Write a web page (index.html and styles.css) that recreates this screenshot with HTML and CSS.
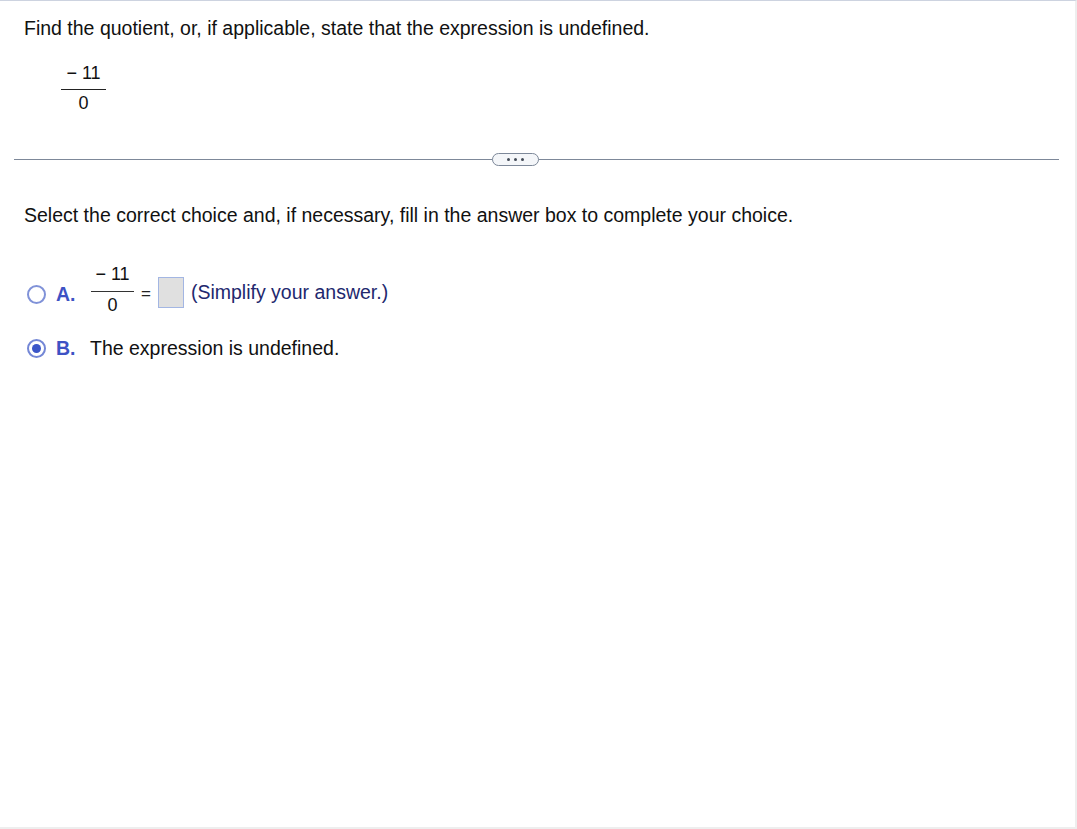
FILE: index.html
```html
<!DOCTYPE html>
<html>
<head>
<meta charset="utf-8">
<link rel="stylesheet" href="styles.css">
</head>
<body>
<div class="page">
  <div class="question">
    <p class="prompt">Find the quotient, or, if applicable, state that the expression is undefined.</p>
    <div class="frac main-frac">
      <span class="num">− 11</span>
      <span class="den">0</span>
    </div>
  </div>
  <div class="divider">
    <span class="more"><i></i><i></i><i></i></span>
  </div>
  <div class="answer">
    <p class="instr">Select the correct choice and, if necessary, fill in the answer box to complete your choice.</p>
    <div class="choice choice-a">
      <span class="radio"></span>
      <span class="letter">A.</span>
      <div class="frac small-frac">
        <span class="num">− 11</span>
        <span class="den">0</span>
      </div>
      <span class="eq">=</span>
      <span class="box"></span>
      <span class="hint">(Simplify your answer.)</span>
    </div>
    <div class="choice choice-b">
      <span class="radio checked"></span>
      <span class="letter">B.</span>
      <span class="text">The expression is undefined.</span>
    </div>
  </div>
</div>
</body>
</html>
```

FILE: styles.css
```css
html, body {
  margin: 0;
  padding: 0;
  background: #ffffff;
}
body {
  font-family: "Liberation Sans", Arial, sans-serif;
  color: #111;
}
.page {
  width: 1075px;
  height: 826px;
  border-top: 1px solid #cdd3e0;
  border-right: 2px solid #eeeeee;
  border-bottom: 2px solid #eeeeee;
  box-sizing: content-box;
}
.question {
  padding: 16px 0 0 24px;
  height: 158px;
  box-sizing: border-box;
}
.prompt {
  margin: 0;
  font-size: 19.5px;
  line-height: 22px;
}
.frac {
  display: inline-flex;
  flex-direction: column;
  align-items: center;
  font-size: 18px;
}
.main-frac {
  margin: 24px 0 0 37px;
  width: 45px;
}
.frac .num {
  display: block;
  width: 100%;
  text-align: center;
  line-height: 20px;
  padding-bottom: 6px;
  border-bottom: 1px solid #222;
}
.frac .den {
  display: block;
  line-height: 20px;
  padding-top: 3px;
}
.divider {
  position: relative;
  margin: 0 0 0 14px;
  width: 1045px;
  height: 1px;
  background: #7d8899;
}
.more {
  position: absolute;
  left: 478px;
  top: -6px;
  width: 45px;
  height: 11px;
  border: 1px solid #7d8899;
  border-radius: 7px;
  background: #f4f6f9;
  display: flex;
  align-items: center;
  justify-content: center;
  gap: 4px;
}
.more i {
  width: 3px;
  height: 3px;
  border-radius: 50%;
  background: #444b57;
}
.answer {
  padding: 44px 0 0 24px;
}
.instr {
  margin: 0;
  font-size: 19.5px;
  line-height: 22px;
}
.choice {
  display: flex;
  align-items: center;
  font-size: 19.5px;
}
.choice-a {
  margin-top: 37px;
  height: 62px;
}
.choice-b {
  margin-top: 12px;
  height: 22px;
}
.radio {
  width: 15px;
  height: 15px;
  border: 2px solid #8092d8;
  border-radius: 50%;
  margin-left: 3px;
  box-sizing: content-box;
  display: flex;
  align-items: center;
  justify-content: center;
}
.radio.checked {
  border-color: #7487d6;
}
.radio.checked::after {
  content: "";
  width: 9px;
  height: 9px;
  border-radius: 50%;
  background: #3b56c8;
}
.letter {
  margin-left: 10px;
  font-weight: bold;
  color: #3d52c4;
  width: 34px;
}
.small-frac {
  width: 43px;
  margin-left: 1px;
  margin-bottom: 11px;
}
.small-frac .num {
  padding-bottom: 7px;
  padding-top: 1px;
  border-bottom-color: #333;
}
.eq {
  margin-left: 7px;
  font-size: 17px;
  color: #222;
}
.box {
  margin-left: 7px;
  width: 24px;
  height: 29px;
  background: #e0e0e0;
  border: 1px solid #a3b6e3;
  margin-bottom: 3px;
}
.hint {
  margin-left: 7px;
  color: #22286e;
  margin-bottom: 4px;
}
.text {
  color: #111;
}
```
